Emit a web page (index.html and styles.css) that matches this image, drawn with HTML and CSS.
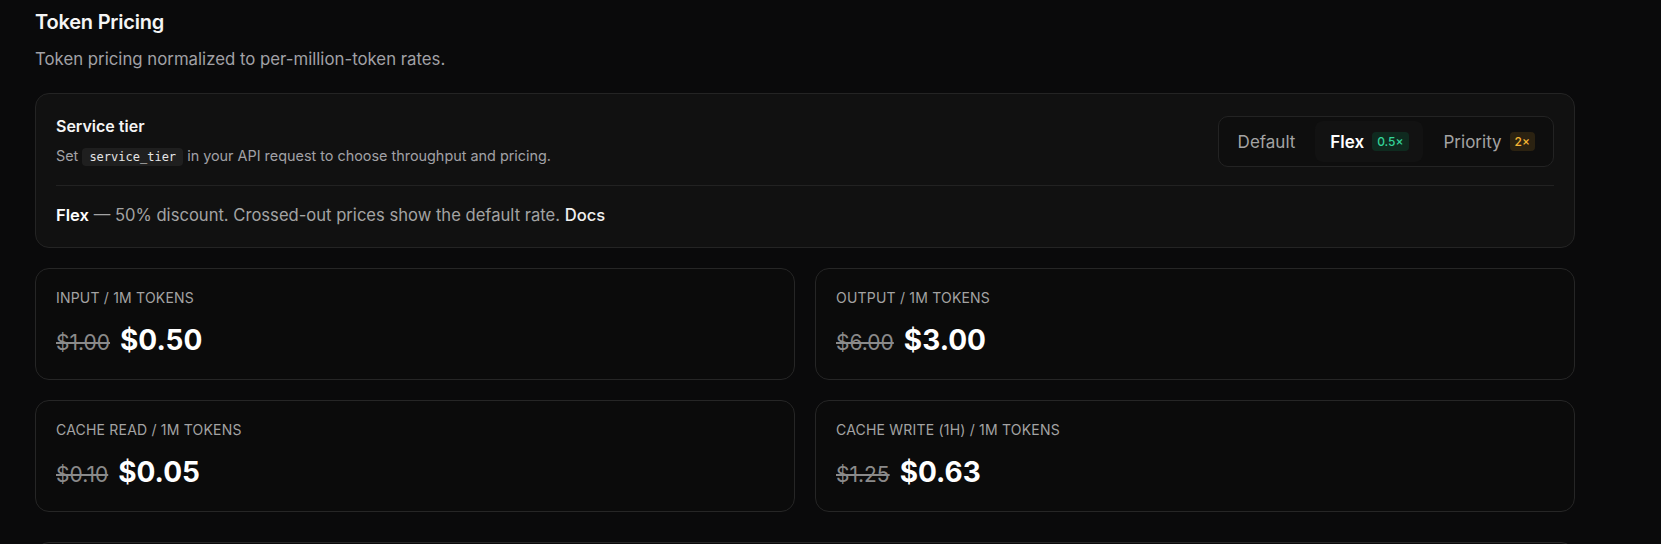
FILE: index.html
```html
<!DOCTYPE html>
<html lang="en">
<head>
<meta charset="utf-8">
<title>Token Pricing</title>
<link rel="stylesheet" href="styles.css">
</head>
<body>
<main class="page">
  <h2 class="title">Token Pricing</h2>
  <p class="subtitle">Token pricing normalized to per-million-token rates.</p>

  <section class="tier-card">
    <div class="tier-head">
      <div class="tier-info">
        <div class="tier-title">Service tier</div>
        <div class="tier-desc">Set <code class="code">service_tier</code> in your API request to choose throughput and pricing.</div>
      </div>
      <div class="segmented">
        <div class="seg">Default</div>
        <div class="seg seg-active">Flex <span class="badge badge-green">0.5×</span></div>
        <div class="seg">Priority <span class="badge badge-amber">2×</span></div>
      </div>
    </div>
    <div class="tier-divider"></div>
    <p class="tier-note"><strong class="note-strong">Flex</strong> — 50% discount. Crossed-out prices show the default rate. <span class="note-link">Docs</span></p>
  </section>

  <section class="price-grid">
    <div class="price-card">
      <div class="price-label">INPUT / 1M TOKENS</div>
      <div class="price-line"><s class="price-old">$1.00</s><span class="price-new">$0.50</span></div>
    </div>
    <div class="price-card">
      <div class="price-label">OUTPUT / 1M TOKENS</div>
      <div class="price-line"><s class="price-old">$6.00</s><span class="price-new">$3.00</span></div>
    </div>
    <div class="price-card">
      <div class="price-label">CACHE READ / 1M TOKENS</div>
      <div class="price-line"><s class="price-old">$0.10</s><span class="price-new">$0.05</span></div>
    </div>
    <div class="price-card">
      <div class="price-label">CACHE WRITE (1H) / 1M TOKENS</div>
      <div class="price-line"><s class="price-old">$1.25</s><span class="price-new">$0.63</span></div>
    </div>
  </section>

  <section class="next-card"></section>
</main>
</body>
</html>
```

FILE: styles.css
```css
* { box-sizing: border-box; }
html, body {
  margin: 0;
  padding: 0;
  background: #0a0a0b;
  color: #f5f5f5;
  font-family: Inter, "Noto Sans", sans-serif;
  overflow: hidden;
}
.page {
  width: 1575px;
  padding: 8px 0 0 35px;
}
.title {
  margin: 0;
  font-size: 20px;
  line-height: 28px;
  font-weight: 600;
  color: #f5f5f5;
  letter-spacing: -0.2px;
}
.subtitle {
  margin: 11px 0 0;
  font-size: 16.8px;
  line-height: 24px;
  color: #a1a1a6;
}
.tier-card {
  margin-top: 22px;
  background: #111111;
  border: 1px solid #242424;
  border-radius: 14px;
  padding: 20px 20px 20px;
}
.tier-head {
  display: flex;
  align-items: center;
  justify-content: space-between;
}
.tier-info {
  display: flex;
  flex-direction: column;
  gap: 8px;
}
.tier-title {
  font-size: 16px;
  line-height: 24px;
  font-weight: 600;
  color: #f5f5f5;
}
.tier-desc {
  font-size: 14.4px;
  line-height: 20px;
  color: #a1a1a6;
}
.code {
  font-family: "DejaVu Sans Mono", "Liberation Mono", monospace;
  font-size: 12px;
  color: #e5e5e5;
  background: #1f1f1f;
  border-radius: 4px;
  padding: 2px 7px;
}
.segmented {
  display: flex;
  gap: 6px;
  padding: 4px;
  margin-top: 2px;
  background: #0e0e0e;
  border: 1px solid #232323;
  border-radius: 10px;
}
.seg {
  display: flex;
  align-items: center;
  gap: 8px;
  height: 41px;
  padding: 0 14px 0 15px;
  font-size: 17px;
  color: #a3a3a3;
  border-radius: 8px;
}
.seg-active {
  background: #121212;
  color: #ffffff;
  font-weight: 600;
}
.badge {
  display: inline-flex;
  align-items: center;
  height: 19px;
  padding: 0 5px;
  border-radius: 4px;
  font-size: 12px;
  font-weight: 500;
}
.badge-green {
  background: #0f2a1f;
  color: #34d399;
}
.badge-amber {
  background: #2b2211;
  color: #f5b533;
}
.tier-divider {
  height: 1px;
  background: #222222;
  margin: 18px 0 17px;
}
.tier-note {
  margin: 0;
  font-size: 16.6px;
  line-height: 24px;
  color: #a3a3a3;
}
.note-strong {
  color: #ffffff;
  font-weight: 600;
}
.note-link {
  color: #f0f0f0;
  font-weight: 500;
}
.price-grid {
  margin-top: 20px;
  display: grid;
  grid-template-columns: 1fr 1fr;
  gap: 20px;
}
.price-card {
  height: 112px;
  background: #0b0b0b;
  border: 1px solid #262626;
  border-radius: 14px;
  padding: 19px 20px 20px;
}
.price-label {
  font-size: 14px;
  line-height: 20px;
  color: #a3a3a3;
  letter-spacing: 0.2px;
}
.price-line {
  margin-top: 14px;
  display: flex;
  align-items: baseline;
  gap: 10px;
  line-height: 36px;
}
.price-old {
  font-size: 21px;
  color: #8a8a8a;
  text-decoration-thickness: 1.5px;
}
.price-new {
  font-size: 28px;
  font-weight: 700;
  color: #ffffff;
}
.next-card {
  margin-top: 30px;
  height: 80px;
  background: #0b0b0b;
  border: 1px solid #262626;
  border-radius: 14px;
}
```
